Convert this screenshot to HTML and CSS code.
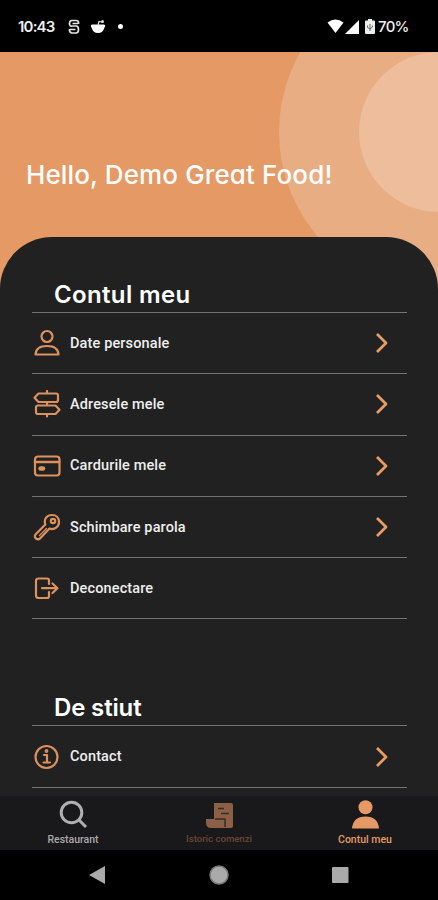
FILE: index.html
```html
<!DOCTYPE html>
<html lang="ro">
<head>
<meta charset="utf-8">
<meta name="viewport" content="width=device-width, initial-scale=1">
<title>Contul meu</title>
<link rel="stylesheet" href="styles.css">
</head>
<body>
<div class="phone">
  <div class="status">
    <span class="clock">10:43</span>
    <svg class="st-s" width="12" height="16" viewBox="0 0 12 16"><path d="M10.5 5V3.5Q10.500 1.500 8 1.500H4Q1.500 1.500 1.500 4.500T4 7H8Q10.500 7 10.500 10.500T8 14H4Q1.500 14 1.500 11V10M4.500 4.500H10M2 10.500H7.500" fill="none" stroke="#e4e4e4" stroke-width="1.700"/></svg>
    <svg class="st-r" width="16" height="15" viewBox="0 0 16 15"><path d="M2 5.500H14Q16 6 14.500 8.500 13 14 8 14T1.500 8.500Q0 6 2 5.500Z" fill="#fff"/><path d="M8 6 9 2.500 12 3" fill="none" stroke="#ddd" stroke-width="1.200"/><circle cx="12.500" cy="2.500" r="1.500" fill="#ddd"/></svg>
    <i class="dot"></i>
    <span class="grow"></span>
    <svg width="17" height="15" viewBox="0 0 17 15"><path d="M.5 3.500Q8.500-2.500 16.500 3.500L8.500 14Z" fill="#fff"/></svg>
    <svg class="signal" width="14" height="14" viewBox="0 0 14 14"><path d="M14 0V14H0Z" fill="#fff"/></svg>
    <svg class="battery" width="10" height="15" viewBox="0 0 10 15"><path d="M3 0H7V1.500H9Q10 1.500 10 2.500V14Q10 15 9 15H1Q0 15 0 14V2.500Q0 1.500 1 1.500H3Z" fill="#eee"/><path d="M5 12V5M2.500 6.500V8.500L5 10 7.500 8V6.500" fill="none" stroke="#666"/></svg>
    <span class="pct">70%</span>
  </div>

  <header class="hero">
    <svg class="rings" width="438" height="240" viewBox="0 0 438 240"><circle cx="439" cy="80" r="160" fill="#e9ad84"/><circle cx="439" cy="80" r="80" fill="#eebd9b"/></svg>
    <h1>Hello, Demo Great Food!</h1>
  </header>

  <main class="sheet">
    <h2 class="account">Contul meu</h2>
    <ul>
      <li><svg class="ic" viewBox="0 0 28 28"><circle cx="14" cy="7.500" r="5.500"/><path d="M2.500 25.500Q3 17 14 17T25.500 25.500Z"/></svg><span>Date personale</span><svg class="chev" viewBox="0 0 14 22"><path d="M2 2 11 11 2 20"/></svg></li>
      <li><svg class="ic" viewBox="0 0 28 28"><path d="M14 1V3.500M14 12V15.500M14 24V26.500M5.500 3.500H23Q25 3.500 25 5.500V10Q25 12 23 12H5.500L1.500 7.700ZM22.500 15.500H5Q3 15.500 3 17.500V22Q3 24 5 24H22.500L26.500 19.700Z"/></svg><span>Adresele mele</span><svg class="chev" viewBox="0 0 14 22"><path d="M2 2 11 11 2 20"/></svg></li>
      <li><svg class="ic" viewBox="0 0 28 28"><rect x="2" y="4.500" width="24.500" height="19" rx="3"/><path d="M2 10H26" stroke-width="2.600"/><path d="M7.500 16.500H10" stroke-width="4.500"/></svg><span>Cardurile mele</span><svg class="chev" viewBox="0 0 14 22"><path d="M2 2 11 11 2 20"/></svg></li>
      <li><svg class="ic" viewBox="0 0 28 28"><path d="M12.300 11.500C10.500 6 14 2 19 2C23.500 2 26 5 26 9C26 13.500 21.500 17.500 16.500 15.500L7 25.500Q5 27 3 25.500T2.500 21.500Z"/><circle cx="20" cy="8" r="2.200"/><path d="M13.500 15.500 6.500 22.500" stroke-width="1.300"/></svg><span>Schimbare parola</span><svg class="chev" viewBox="0 0 14 22"><path d="M2 2 11 11 2 20"/></svg></li>
      <li><svg class="ic" viewBox="0 0 28 28"><path d="M16 10V6.500Q16 4.500 14 4.500H5.500Q3 4.500 3 7V21.500Q3 24 5.500 24H14Q16 24 16 22V18M9 14.200H24M19.500 9.500 24.500 14.200 19.500 19"/></svg><span>Deconectare</span></li>
    </ul>
    <h2 class="know">De stiut</h2>
    <ul>
      <li><svg class="ic" viewBox="0 0 28 28"><circle cx="13.500" cy="14" r="11"/><path d="M11 12H14V19M10.500 19.500H17"/><circle cx="13.500" cy="8" r=".8" /></svg><span>Contact</span><svg class="chev" viewBox="0 0 14 22"><path d="M2 2 11 11 2 20"/></svg></li>
    </ul>
  </main>

  <nav class="tabs">
    <div class="tab search"><svg width="30" height="30" viewBox="0 0 30 30"><circle cx="13.500" cy="12.500" r="10.300"/><path d="M20.500 19.500 28 27"/></svg><span>Restaurant</span></div>
    <div class="tab orders"><svg width="30" height="30" viewBox="0 0 30 30"><path d="M10 3H27Q29 3 29 5V26Q29 28 27 28H7Q2 28 2 22V19H10Z"/><path class="cut" d="M14 8.500H20M17 13.500H25M11 19H21V27"/></svg><span>Istoric comenzi</span></div>
    <div class="tab active"><svg width="30" height="30" viewBox="0 0 30 30"><circle cx="15.500" cy="7.200" r="7"/><path d="M2 28.500Q3 16.500 15.500 16.500T29 28.500Z"/></svg><span>Contul meu</span></div>
  </nav>

  <footer class="system">
    <svg width="18" height="20" viewBox="0 0 18 20"><path d="M17 1V19L1 10Z" fill="#aaa"/></svg>
    <svg width="20" height="20" viewBox="0 0 20 20"><circle cx="10" cy="10" r="9" fill="#aaa" stroke="#777" stroke-width="1.500"/></svg>
    <svg width="18" height="18" viewBox="0 0 18 18"><rect x="1" y="1" width="16.500" height="16" rx="1" fill="#aaa"/></svg>
  </footer>
</div>
</body>
</html>
```

FILE: styles.css
```css
* { box-sizing: border-box; }
body { margin: 0; background: #000; }
svg { display: block; flex: none; }
h1, h2, ul { margin: 0; padding: 0; }
.phone {
  width: 438px;
  height: 900px;
  display: flex;
  flex-direction: column;
  overflow: hidden;
  font-family: Roboto, sans-serif;
  color: #eee;
}
.status {
  height: 52px;
  flex: none;
  display: flex;
  align-items: center;
  padding: 1px 29px 0 18px;
  font: 600 15px Inter, sans-serif;
}
.clock { width: 50px; letter-spacing: -.8px; }
.st-r { margin-left: 10px; }
.dot { width: 5px; height: 5px; border-radius: 50%; background: #fff; margin-left: 12px; }
.grow { flex: 1; }
.signal { margin-left: 1px; }
.battery { margin: 0 3px 0 6px; }
.pct { width: 31px; font-weight: 500; letter-spacing: -.7px; }
.hero {
  position: relative;
  height: 240px;
  margin-bottom: -55px;
  flex: none;
  padding: 104px 0 0 26px;
  background: #e59964;
}
.rings { position: absolute; left: 0; top: 0; }
h1, h2 {
  font-family: Inter, "Open Sans", sans-serif;
  font-feature-settings: "cv11";
  white-space: nowrap;
  color: #fff;
}
h1 { position: relative; font-size: 26px; line-height: 38px; font-weight: 500; letter-spacing: .12px; }
.sheet {
  position: relative;
  height: 559px;
  flex: none;
  padding: 38px 31px 0 32px;
  background: #212121;
  border-radius: 52px 52px 0 0;
  overflow: hidden;
}
.sheet h2 { height: 37px; padding-left: 22px; font-size: 24px; line-height: 39px; font-weight: 600; letter-spacing: .35px; }
.sheet .know { margin-top: 69px; height: 37px; letter-spacing: -.15px; }
ul { list-style: none; border-top: 1px solid #747474; }
li { height: 61.300px; display: flex; align-items: center; border-bottom: 1px solid #747474; }
li span { margin-left: 9px; flex: 1; font-size: 14.500px; font-weight: 500; letter-spacing: .13px; }
.ic { width: 28px; height: 28px; margin-left: 1px; }
.chev { width: 14px; height: 22px; margin-right: 18px; }
.ic, .chev { fill: none; stroke: #dc915e; stroke-width: 2.200; stroke-linecap: round; stroke-linejoin: round; }
.chev { stroke: #e79b65; stroke-width: 2.800; stroke-linecap: butt; }
.tabs {
  height: 54px;
  flex: none;
  display: grid;
  grid-template-columns: repeat(3, 146px);
  background: #19191c;
}
.tab { display: flex; flex-direction: column; align-items: center; padding-top: 4px; font-size: 10.500px; line-height: 14px; font-weight: 500; white-space: nowrap; }
.tab span { margin-top: 3px; }
.search { color: #aaa; }
.search svg { fill: none; stroke: #b0b0b3; stroke-width: 3; }
.orders { color: #6b4633; font-size: 9.600px; }
.orders span { margin-top: 2px; }
.orders svg { fill: #8c6047; }
.orders .cut { fill: none; stroke: #3a2b25; stroke-width: 1.500; }
.active { color: #e59964; }
.active svg { fill: #e59964; }
.system {
  height: 50px;
  display: flex;
  align-items: center;
  justify-content: space-between;
  padding: 0 89px 0 88px;
  background: #000;
}
```
